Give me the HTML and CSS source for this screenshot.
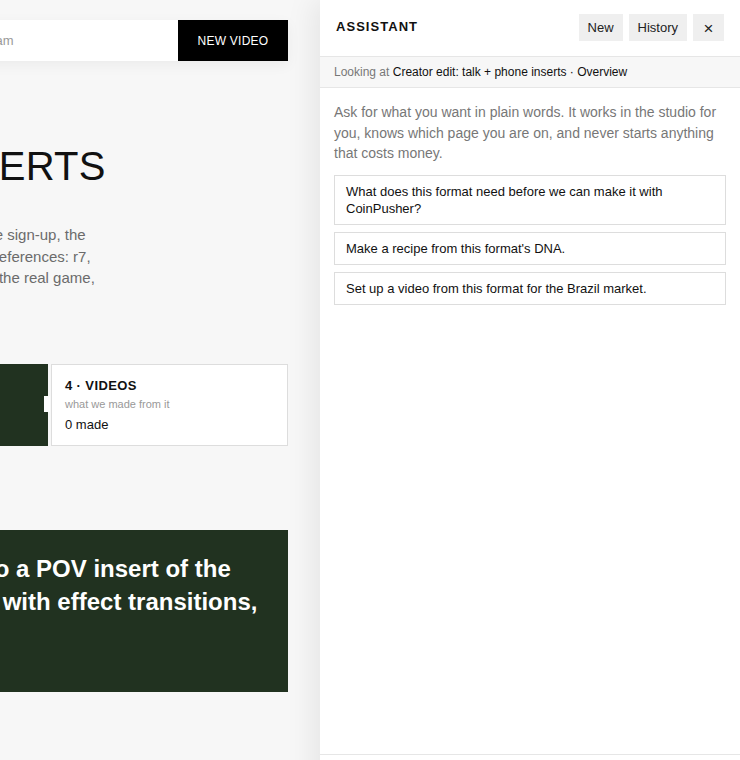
FILE: index.html
```html
<!DOCTYPE html>
<html lang="en">

<head>
    <meta charset="UTF-8">
    <meta name="viewport" content="width=device-width, initial-scale=1.0">
    <title>Creator edit: talk + phone inserts</title>
    <link rel="stylesheet" href="styles.css">
</head>

<body>

    <div class="app">
        <main class="main">
            <div class="page">
                <div class="topbar">
                    <input class="search" type="text" placeholder="Search formats, recipes, videos, markets or people on the team">
                    <button type="button" class="btn-dark">NEW VIDEO</button>
                </div>

                <h1 class="title">TALK + PHONE INSERTS</h1>
                <p class="lede">
                    A creator talks to the camera, then the phone shows the sign-up, the<br>
                    the bonus and the first free spins. Cut it like the house references: r7,<br>
                    r12, r14 and r19. Keep the phone screen honest, show the real game,<br>
                    no mock-ups.
                </p>

                <div class="steps">
                    <div class="step">
                        <div class="step-name">2 · RECIPES</div>
                        <div class="step-sub">how we make it</div>
                        <div class="step-value">1 recipe</div>
                    </div>
                    <div class="step step-current">
                        <div class="step-name">3 · DNA</div>
                        <div class="step-sub">what makes it work</div>
                        <div class="step-value">ready</div>
                    </div>
                    <div class="step">
                        <div class="step-name">4 · VIDEOS</div>
                        <div class="step-sub">what we made from it</div>
                        <div class="step-value">0 made</div>
                    </div>
                </div>

                <div class="summary">
                    Hook on camera, then we cut to a POV insert of the<br>
                    phone screen and the sign-up, with effect transitions,<br>
                    ending on the bonus.
                </div>
            </div>
        </main>

        <aside class="assistant">
            <div class="assistant-head">
                <span class="assistant-title">ASSISTANT</span>
                <div class="head-actions">
                    <button type="button" class="btn-soft">New</button>
                    <button type="button" class="btn-soft">History</button>
                    <button type="button" class="btn-soft btn-close">&times;</button>
                </div>
            </div>

            <div class="context">Looking at <span class="context-page">Creator edit: talk + phone inserts · Overview</span></div>

            <div class="assistant-body">
                <p class="intro">Ask for what you want in plain words. It works in the studio for you, knows which page you are on, and never starts anything that costs money.</p>

                <button type="button" class="suggestion">What does this format need before we can make it with CoinPusher?</button>
                <button type="button" class="suggestion">Make a recipe from this format's DNA.</button>
                <button type="button" class="suggestion">Set up a video from this format for the Brazil market.</button>
            </div>

            <div class="composer">
                <textarea class="composer-input" placeholder="Ask the assistant…"></textarea>
            </div>
        </aside>
    </div>

</body>

</html>
```

FILE: styles.css
```css
html,
body {
    margin: 0;
    overflow: hidden;
}

body {
    font-family: "Liberation Sans", Arial, sans-serif;
    background: #f7f7f7;
    color: #111;
}

button {
    font-family: inherit;
    cursor: pointer;
}

.app {
    display: flex;
    height: 860px;
}

/* main page, pushed to the left by the panel */
.main {
    flex: 1;
    display: flex;
    justify-content: flex-end;
    overflow: hidden;
    min-width: 0;
}

.page {
    flex-shrink: 0;
    width: 720px;
    padding: 20px 32px 0;
    box-sizing: border-box;
}

.topbar {
    display: flex;
    height: 41px;
    box-shadow: 0 4px 14px rgba(0, 0, 0, 0.05);
}

.search {
    flex: 1;
    border: none;
    background: #fff;
    padding: 0 16px;
    font-family: inherit;
    font-size: 13px;
    color: #111;
    outline: none;
}

.search::placeholder {
    color: #999;
}

.btn-dark {
    width: 110px;
    background: #000;
    color: #fff;
    border: none;
    font-size: 12px;
    letter-spacing: 0.02em;
}

.title {
    margin: 81px 0 0;
    font-size: 40px;
    font-weight: normal;
    line-height: 48px;
    letter-spacing: 0.25px;
    white-space: nowrap;
}

.lede {
    margin: 34px 0 0;
    font-size: 15px;
    line-height: 21.5px;
    color: #6b6b6b;
    white-space: nowrap;
}

.steps {
    display: flex;
    gap: 3px;
    margin-top: 54px;
}

.step {
    flex: 1;
    position: relative;
    height: 82px;
    padding: 13px 13px 0;
    box-sizing: border-box;
    background: #fff;
    border: 1px solid #ddd;
}

.step:last-child {
    flex: 0 0 237px;
}

.step-current {
    background: #213220;
    border-color: #213220;
    color: #fff;
}

/* small tab pointing at the next step */
.step-current::after {
    content: "";
    position: absolute;
    right: -3px;
    top: 31px;
    width: 6px;
    height: 16px;
    background: #fff;
}

.step-name {
    font-size: 13px;
    font-weight: bold;
    letter-spacing: 0.03em;
}

.step-sub {
    margin-top: 5px;
    font-size: 11px;
    color: #999;
}

.step-value {
    margin-top: 7px;
    font-size: 13px;
}

.summary {
    margin-top: 84px;
    height: 162px;
    padding: 22px 16px 0;
    box-sizing: border-box;
    background: #213220;
    color: #fff;
    font-size: 24px;
    font-weight: bold;
    line-height: 33px;
    white-space: nowrap;
    overflow: hidden;
}

/* assistant panel */
.assistant {
    flex: 0 0 420px;
    display: flex;
    flex-direction: column;
    background: #fff;
    box-shadow: -6px 0 28px rgba(0, 0, 0, 0.08);
    position: relative;
}

.assistant-head {
    display: flex;
    align-items: center;
    justify-content: space-between;
    height: 56px;
    padding: 0 16px;
    border-bottom: 1px solid #e6e6e6;
}

.assistant-title {
    margin-top: -3px;
    font-size: 13px;
    font-weight: bold;
    letter-spacing: 0.08em;
}

.head-actions {
    display: flex;
    gap: 6px;
    margin-top: -1px;
}

.btn-soft {
    height: 27px;
    padding: 0 9px;
    border: none;
    background: #efefef;
    color: #222;
    font-size: 13px;
}

.btn-close {
    width: 31px;
    padding: 0;
    font-size: 17px;
    line-height: 1;
    padding-top: 2px;
}

.context {
    height: 30px;
    line-height: 30px;
    padding: 0 14px;
    background: #f7f7f7;
    border-bottom: 1px solid #e6e6e6;
    font-size: 12px;
    color: #777;
}

.context-page {
    color: #111;
}

.assistant-body {
    flex: 1;
    padding: 14px;
    display: flex;
    flex-direction: column;
    gap: 7px;
}

.intro {
    margin: 0 0 4px;
    font-size: 14px;
    line-height: 20.5px;
    color: #777;
}

.suggestion {
    text-align: left;
    padding: 7px 11px;
    background: #fff;
    border: 1px solid #ddd;
    font-size: 13px;
    line-height: 17px;
    color: #111;
}

.composer {
    height: 106px;
    border-top: 1px solid #e6e6e6;
    padding: 12px 14px;
    box-sizing: border-box;
}

.composer-input {
    width: 100%;
    height: 60px;
    border: 1px solid #ddd;
    box-sizing: border-box;
    font-family: inherit;
    font-size: 13px;
    resize: none;
}
```
